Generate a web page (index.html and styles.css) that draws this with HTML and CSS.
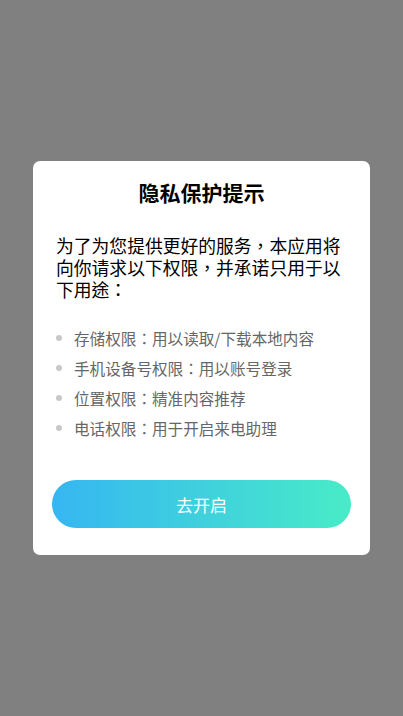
FILE: index.html
```html
<!DOCTYPE html>
<html lang="zh-Hant">
<head>
<meta charset="utf-8">
<link rel="stylesheet" href="styles.css">
</head>
<body>
<div class="screen">
  <div class="dialog">
    <h1 class="title">隐私保护提示</h1>
    <p class="intro">为了为您提供更好的服务，本应用将向你请求以下权限，并承诺只用于以下用途：</p>
    <ul class="perms">
      <li>存储权限：用以读取/下载本地内容</li>
      <li>手机设备号权限：用以账号登录</li>
      <li>位置权限：精准内容推荐</li>
      <li>电话权限：用于开启来电助理</li>
    </ul>
    <button class="btn">去开启</button>
  </div>
</div>
</body>
</html>
```
FILE: styles.css
```css
html, body {
  margin: 0;
  padding: 0;
  height: 100%;
}
body {
  background: #808080;
  font-family: "Noto Sans CJK TC", "Noto Sans CJK SC", "Noto Sans", sans-serif;
}
.screen {
  height: 716px;
  display: flex;
  justify-content: center;
  padding-top: 161px;
  box-sizing: border-box;
}
.dialog {
  width: 337px;
  height: 394px;
  background: #fff;
  border-radius: 7px;
  box-sizing: border-box;
  padding: 16px 19px 0 19px;
  display: flex;
  flex-direction: column;
}
.title {
  margin: 0;
  text-align: center;
  font-size: 21px;
  line-height: 30px;
  font-weight: 700;
  color: #000;
}
.intro {
  margin: 27px 0 0 4px;
  font-size: 17.8px;
  line-height: 22px;
  color: #000;
}
.perms {
  list-style: none;
  margin: 23px 0 0 4px;
  padding: 0;
}
.perms li {
  display: flex;
  align-items: center;
  height: 30px;
  font-size: 15.6px;
  color: #666;
}
.perms li::before {
  content: "";
  width: 6px;
  height: 6px;
  border-radius: 50%;
  background: #c8c8c8;
  margin-right: 12px;
  flex: none;
}
.btn {
  margin-top: 37px;
  height: 48px;
  width: 299px;
  align-self: center;
  border: none;
  border-radius: 24px;
  background: linear-gradient(90deg, #36b6f2, #48ebc8);
  color: #fff;
  font-family: inherit;
  font-size: 17px;
  padding: 0;
}
```
